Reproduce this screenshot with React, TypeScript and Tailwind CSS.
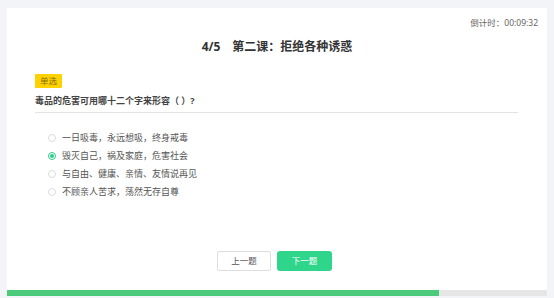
import React from 'react';

const options = [
  '一日吸毒，永远想吸，终身戒毒',
  '毁灭自己，祸及家庭，危害社会',
  '与自由、健康、亲情、友情说再见',
  '不顾亲人苦求，荡然无存自尊',
];

export default function App() {
  const selected = 1;
  const progress = (4 / 5) * 100;

  return (
    <div
      className="w-[554px] h-[298px] bg-[#f2f4f7] pt-[8px] px-[7px] flex flex-col"
      style={{ fontFamily: '"Noto Sans", "Noto Sans CJK SC", sans-serif' }}
    >
      <div className="flex-1 bg-white flex flex-col">
        {/* Countdown */}
        <div className="flex justify-end pr-[9px] pt-[10px] h-[24px]">
          <span className="text-[8.5px] leading-[10px] text-[#666]">倒计时：00:09:32</span>
        </div>

        {/* Title */}
        <div className="flex justify-center mt-[7px]">
          <h1 className="text-[12px] leading-[16px] font-bold text-[#333] flex gap-[12px]">
            <span>4/5</span>
            <span>第二课：拒绝各种诱惑</span>
          </h1>
        </div>

        {/* Question */}
        <div className="px-[28px] mt-[19px] flex flex-col items-start">
          <span className="block bg-[#fcd200] text-[#8a6d00] text-[8.5px] leading-[14px] px-[5px] rounded-[1px]">
            单选
          </span>
          <p className="self-stretch mt-[7px] text-[9px] leading-[12px] font-bold text-[#444] pb-[5px] border-b border-[#e3e3e3] mr-[1px]">
            毒品的危害可用哪十二个字来形容（ ）?
          </p>
        </div>

        {/* Options */}
        <div className="pl-[41px] mt-[18px] flex flex-col gap-[5px]">
          {options.map((text, i) => (
            <div key={i} className="flex items-center h-[13px]">
              <span
                className={`w-[8px] h-[8px] rounded-full border flex items-center justify-center ${
                  i === selected ? 'border-[#2ecc8a]' : 'border-[#dcdcdc]'
                }`}
              >
                {i === selected && <span className="w-[4px] h-[4px] rounded-full bg-[#2ecc8a]" />}
              </span>
              <span className="ml-[6px] text-[9px] leading-[12px] text-[#555]">{text}</span>
            </div>
          ))}
        </div>

        {/* Buttons */}
        <div className="mt-auto mb-[19px] flex justify-center gap-[6px] pr-[5px]">
          <button className="w-[54px] h-[20px] border border-[#dedede] bg-white text-[8.5px] text-[#555] rounded-[2px]">
            上一题
          </button>
          <button className="w-[55px] h-[20px] bg-[#2fd58b] text-[8.5px] text-white rounded-[3px]">
            下一题
          </button>
        </div>

        {/* Progress */}
        <div className="h-[6px] bg-[#e6e6e6]">
          <div className="h-full bg-[#4cca7c]" style={{ width: `${progress}%` }} />
        </div>
      </div>
      <div className="h-[2px]" />
    </div>
  );
}
